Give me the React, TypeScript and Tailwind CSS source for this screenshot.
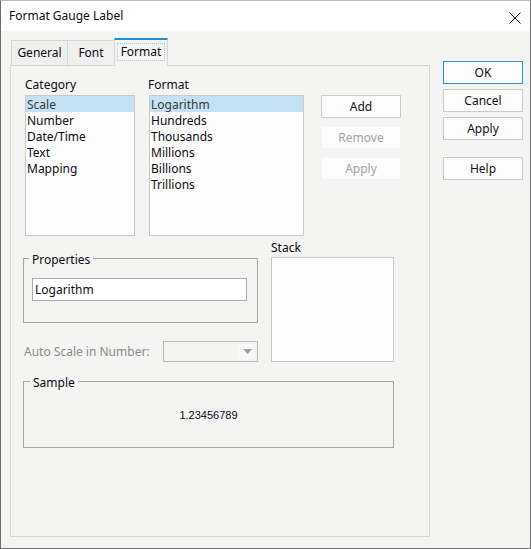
import React from "react";

const categorias = ["Scale", "Number", "Date/Time", "Text", "Mapping"];
const formatos = ["Logarithm", "Hundreds", "Thousands", "Millions", "Billions", "Trillions"];

const btn =
  "flex h-[23px] w-[80px] items-center justify-center border border-[#cccccc] bg-[#fdfdfd] text-[12px] text-[#111]";
const btnDisabled =
  "flex h-[23px] w-[80px] items-center justify-center border border-[#f4f5f3] bg-[#fbfcfb] text-[12px] text-[#a3a3a3]";

function ListBox({ items, width }: { items: string[]; width: string }) {
  return (
    <div className={`${width} h-[141px] border border-[#c9c9c9] bg-[#fcfdfc]`}>
      {items.map((it, i) => (
        <div
          key={it}
          className={
            i === 0
              ? "h-[16px] overflow-hidden bg-[#c4e2f4] pl-[1px] leading-[18px] text-[#3a3a3a]"
              : "h-[16px] overflow-hidden pl-[1px] leading-[18px] text-[#0b0b14]"
          }
        >
          {it}
        </div>
      ))}
    </div>
  );
}

export default function App() {
  return (
    <div className="flex h-[549px] w-[531px] flex-col border border-[#6f6f6f] border-t-[#bdbdbd] bg-[#f4f5f3] font-['Noto_Sans',sans-serif] text-[12px] text-[#0b0b14]">
      {/* barra de titulo */}
      <div className="flex h-[30px] items-center justify-between bg-white pl-[8px] pr-[9px]">
        <span className="text-[12px] leading-[16px]">Format Gauge Label</span>
        <svg width="12" height="12" viewBox="0 0 12 12" className="mt-[4px]">
          <path d="M0.5 0.5 L11.5 11.5 M11.5 0.5 L0.5 11.5" stroke="#111" strokeWidth="1" />
        </svg>
      </div>

      <div className="flex">
        {/* tabs + panel */}
        <div className="ml-[9px] flex flex-col">
          <div className="flex h-[34px] items-end pl-[1px]">
            <div className="flex h-[25px] w-[56px] items-center justify-center border-l border-t border-[#d6d6d6] bg-[#f0f1ef]">
              General
            </div>
            <div className="flex h-[25px] w-[47px] items-center justify-center border-l border-t border-[#d6d6d6] bg-[#f0f1ef]">
              Font
            </div>
            <div className="relative z-10 -mb-px flex h-[28px] w-[54px] items-center justify-center border-x border-t-2 border-x-[#d6d6d6] border-t-[#1e8fd8] bg-[#f4f5f3] pb-[2px]">
              <span className="border border-dotted border-[#a8cbe6] px-[3px] leading-[16px]">Format</span>
            </div>
          </div>

          <div className="h-[472px] w-[420px] border border-[#d6d6d6] pl-[12px] pt-[11px]">
            {/* fila 1 */}
            <div className="flex pl-[2px]">
              <div className="flex flex-col">
                <span className="mb-[2px] leading-[16px]">Category</span>
                <ListBox items={categorias} width="w-[110px]" />
              </div>
              <div className="ml-[14px] flex flex-col">
                <span className="mb-[2px] -ml-px leading-[16px]">Format</span>
                <ListBox items={formatos} width="w-[155px]" />
              </div>
              <div className="ml-[17px] flex flex-col gap-[8px] pt-[18px]">
                <button className={btn}>Add</button>
                <button className={btnDisabled}>Remove</button>
                <button className={btnDisabled}>Apply</button>
              </div>
            </div>

            {/* fila 2 */}
            <div className="mt-[3px] flex">
              <div className="flex w-[235px] flex-col pt-[10px]">
                <fieldset className="h-[74px] border border-[#a5a5a5] pb-[21px] pl-[8px]">
                  <legend className="-ml-[3px] px-[3px] pt-[3px] leading-[16px]">Properties</legend>
                  <div className="mt-[10px] flex h-[23px] w-[215px] items-center border border-[#acacac] bg-white pl-[2px]">
                    Logarithm
                  </div>
                </fieldset>
                <div className="mt-[18px] flex h-[21px] items-center">
                  <span className="ml-px w-[139px] pt-[1px] text-[#8a8a8a]">Auto Scale in Number:</span>
                  <div className="flex h-[21px] w-[95px] items-center justify-end border border-[#b9b9b9] pr-[2px]">
                    <div className="flex h-[15px] w-[16px] items-center justify-center bg-[#f8f8f8]">
                      <svg width="9" height="5" viewBox="0 0 9 5">
                        <path d="M0 0 H9 L4.5 5 Z" fill="#a0a0a0" />
                      </svg>
                    </div>
                  </div>
                </div>
              </div>
              <div className="ml-[13px] flex flex-col">
                <span className="mb-[1px] pt-[1px] leading-[16px]">Stack</span>
                <div className="h-[105px] w-[123px] border border-[#c9c9c9] bg-[#fcfdfc]" />
              </div>
            </div>

            {/* fila 3 */}
            <fieldset className="mt-[10px] h-[76px] w-[371px] border border-[#a5a5a5]">
              <legend className="ml-[6px] px-[3px] pt-[3px] leading-[16px]">Sample</legend>
              <div className="mt-[16px] text-center font-['Liberation_Sans',sans-serif] text-[11px] leading-[16px]">
                1.23456789
              </div>
            </fieldset>
          </div>
        </div>

        {/* botones derecha */}
        <div className="ml-[13px] mt-[30px] flex flex-col">
          <button className="flex h-[23px] w-[80px] items-center justify-center border border-[#2f8fd8] bg-[#fdfdfd] text-[12px]">
            OK
          </button>
          <button className={`${btn} mt-[5px]`}>Cancel</button>
          <button className={`${btn} mt-[5px]`}>Apply</button>
          <button className={`${btn} mt-[17px]`}>Help</button>
        </div>
      </div>
    </div>
  );
}
